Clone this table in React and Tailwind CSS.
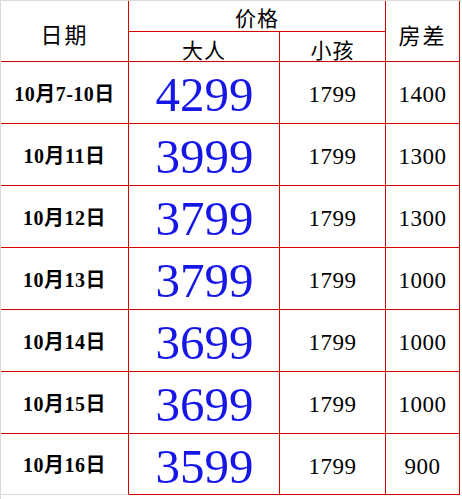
import React from 'react';

const rows = [
  { date: '10月7-10日', adult: '4299', child: '1799', diff: '1400' },
  { date: '10月11日', adult: '3999', child: '1799', diff: '1300' },
  { date: '10月12日', adult: '3799', child: '1799', diff: '1300' },
  { date: '10月13日', adult: '3799', child: '1799', diff: '1000' },
  { date: '10月14日', adult: '3699', child: '1799', diff: '1000' },
  { date: '10月15日', adult: '3699', child: '1799', diff: '1000' },
  { date: '10月16日', adult: '3599', child: '1799', diff: '900' },
];

const App = () => {
  return (
    <div className="w-[462px] h-[499px] bg-white overflow-hidden">
      <div className="border-t border-l border-[#dadada] w-[462px] h-[499px]">
        <div className="grid grid-cols-[128px_151px_106px_74px] grid-rows-[31px_30px_repeat(6,62px)_61px] text-black">
          <div className="row-span-2 border-r border-b border-r-[#d40000] border-b-[#d40000] flex items-center justify-center pt-[4px] text-[22px] tracking-[2px] font-['Noto_Sans_CJK_SC',sans-serif]">
            日期
          </div>
          <div className="col-span-2 border-r border-b border-[#d40000] flex items-center justify-center pt-[3px] text-[21px] tracking-[1px] font-['Noto_Sans_CJK_SC',sans-serif]">
            价格
          </div>
          <div className="row-span-2 border-r border-b border-[#d40000] flex items-center justify-center pt-[7px] text-[22px] tracking-[2px] font-['Noto_Sans_CJK_SC',sans-serif]">
            房差
          </div>
          <div className="border-r border-b border-[#d40000] flex items-center justify-center pt-[6px] text-[21px] tracking-[1px] font-['Noto_Sans_CJK_SC',sans-serif]">
            大人
          </div>
          <div className="border-r border-b border-[#d40000] flex items-center justify-center pt-[6px] text-[21px] tracking-[1px] font-['Noto_Sans_CJK_SC',sans-serif]">
            小孩
          </div>

          {rows.map((r, i) => {
            const last = i === rows.length - 1;
            return (
              <React.Fragment key={i}>
                <div
                  className={
                    last
                      ? "border-r border-b border-r-[#d40000] border-b-[#dadada] flex items-center justify-center pt-[2px] text-[20px] tracking-[0.5px] font-bold font-['Liberation_Serif','Noto_Sans_CJK_SC',serif]"
                      : "border-r border-b border-r-[#d40000] border-b-[#d40000] flex items-center justify-center pt-[2px] text-[20px] tracking-[0.5px] font-bold font-['Liberation_Serif','Noto_Sans_CJK_SC',serif]"
                  }
                >
                  {r.date}
                </div>
                <div className="border-r border-b border-[#d40000] flex items-center justify-center pt-[4px] pl-[1px] text-[49px] leading-none text-[#1616e6] font-['Liberation_Serif',serif]">
                  {r.adult}
                </div>
                <div className="border-r border-b border-[#d40000] flex items-center justify-center pt-[4px] text-[23px] tracking-[0.5px] leading-none font-['Liberation_Serif',serif]">
                  {r.child}
                </div>
                <div className="border-r border-b border-[#d40000] flex items-center justify-center pt-[4px] text-[23px] tracking-[0.5px] leading-none font-['Liberation_Serif',serif]">
                  {r.diff}
                </div>
              </React.Fragment>
            );
          })}
        </div>
      </div>
    </div>
  );
};

export default App;
